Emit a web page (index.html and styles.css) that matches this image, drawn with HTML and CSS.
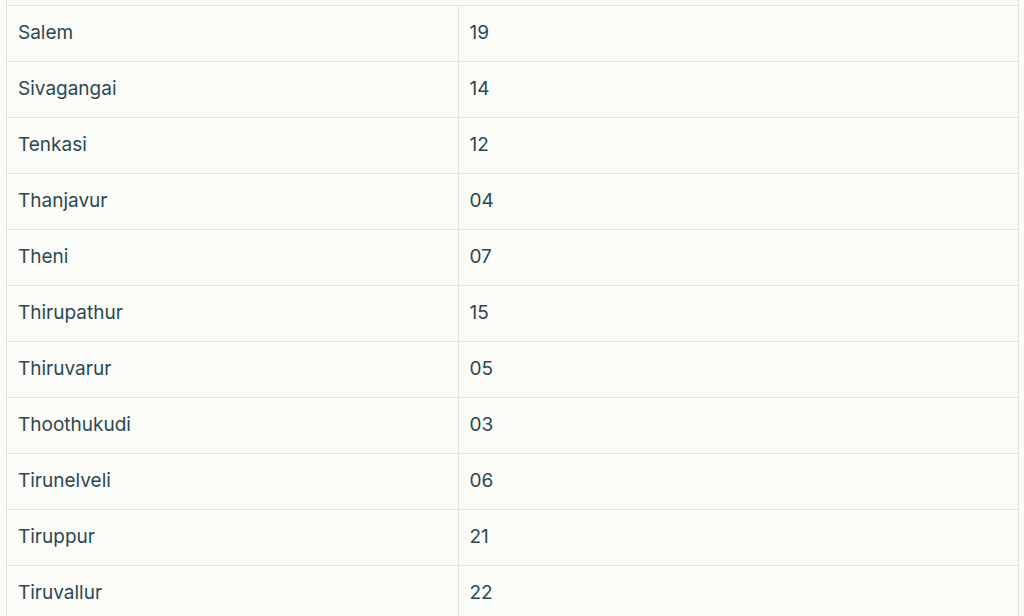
FILE: index.html
```html
<!DOCTYPE html>
<html lang="en">
<head>
<meta charset="utf-8">
<title>Districts</title>
<link rel="stylesheet" href="styles.css">
</head>
<body>
<div class="wrap">
  <table class="districts">
    <tbody>
      <tr><td class="name">Salem</td><td class="code">19</td></tr>
      <tr><td class="name">Sivagangai</td><td class="code">14</td></tr>
      <tr><td class="name">Tenkasi</td><td class="code">12</td></tr>
      <tr><td class="name">Thanjavur</td><td class="code">04</td></tr>
      <tr><td class="name">Theni</td><td class="code">07</td></tr>
      <tr><td class="name">Thirupathur</td><td class="code">15</td></tr>
      <tr><td class="name">Thiruvarur</td><td class="code">05</td></tr>
      <tr><td class="name">Thoothukudi</td><td class="code">03</td></tr>
      <tr><td class="name">Tirunelveli</td><td class="code">06</td></tr>
      <tr><td class="name">Tiruppur</td><td class="code">21</td></tr>
      <tr><td class="name">Tiruvallur</td><td class="code">22</td></tr>
    </tbody>
  </table>
</div>
</body>
</html>
```
FILE: styles.css
```css
html, body {
  margin: 0;
  padding: 0;
  background: #fbfbf8;
  overflow: hidden;
}
.wrap {
  margin: 0 5px 0 6px;
  padding-top: 5px;
  border-left: 1px solid #e4e4e1;
  border-right: 1px solid #e4e4e1;
  height: 700px;
}
.districts {
  width: 100%;
  border-collapse: collapse;
  font-family: Inter, "Noto Sans", sans-serif;
  font-size: 19px;
  color: #2b4950;
}
.districts td {
  height: 56px;
  padding: 0 0 2px 11px;
  border-top: 1px solid #e4e4e1;
  vertical-align: middle;
  box-sizing: border-box;
}
.districts .name {
  width: 451px;
  border-right: 1px solid #e4e4e1;
}
```
